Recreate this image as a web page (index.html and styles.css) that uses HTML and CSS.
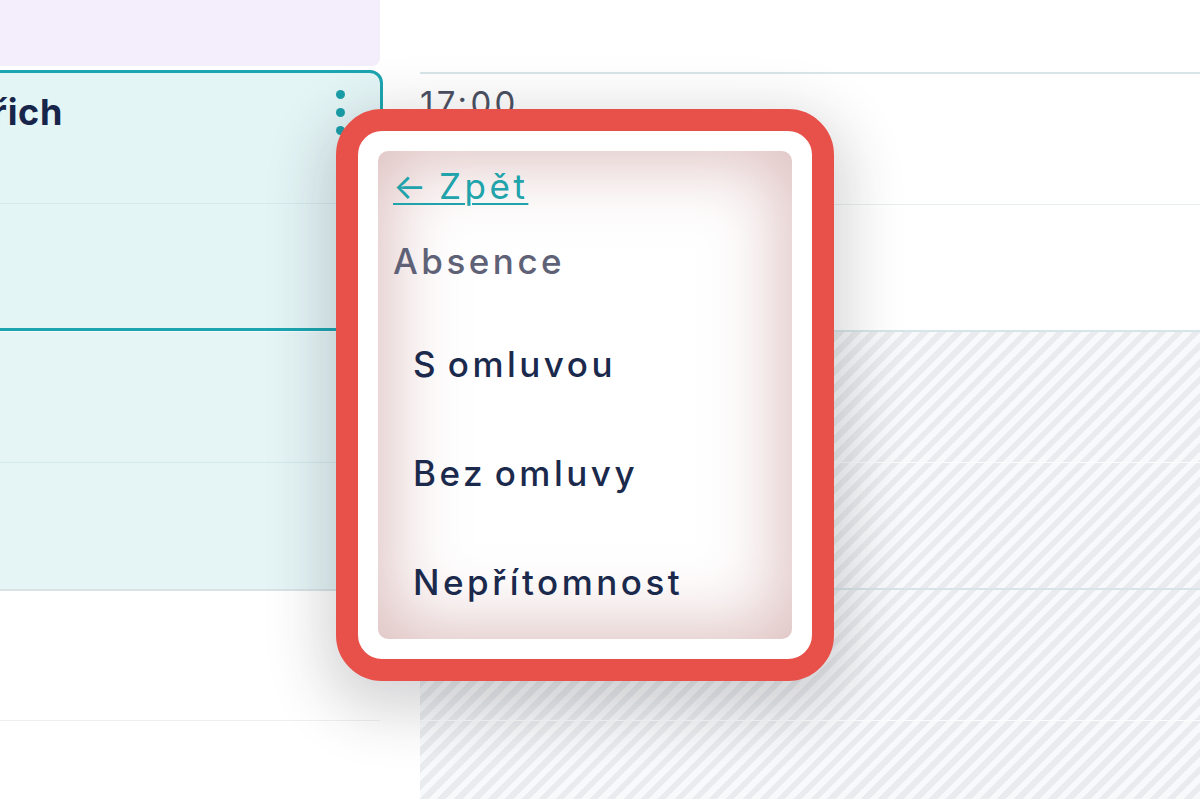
FILE: index.html
```html
<!DOCTYPE html>
<html lang="cs">
<head>
  <meta charset="UTF-8" />
  <title>Rozvrh – absence</title>
  <link rel="stylesheet" href="styles.css">
</head>
<body>
  <div class="day">
    <div class="col col-events">
      <div class="event event-lesson"></div>

      <div class="event event-selected">
        <div class="event-half">
          <div class="event-head">
            <div class="event-title">řich</div>
            <div class="kebab">
              <span class="dot"></span>
              <span class="dot"></span>
              <span class="dot"></span>
            </div>
          </div>
        </div>
      </div>

      <div class="event event-next">
        <div class="event-half"></div>
      </div>

      <div class="empty-slot"></div>
    </div>

    <div class="col col-times">
      <div class="row row-top"></div>
      <div class="row row-half">
        <div class="time-label">17:00</div>
      </div>
      <div class="row row-hour"></div>
      <div class="blocked">
        <div class="row row-half row-faint"></div>
        <div class="row row-hour"></div>
        <div class="row row-half row-faint"></div>
      </div>
    </div>
  </div>

  <div class="highlight">
    <div class="menu">
      <a class="menu-back" href="#">← Zpět</a>
      <div class="menu-heading">Absence</div>
      <ul class="menu-list">
        <li class="menu-item">S omluvou</li>
        <li class="menu-item">Bez omluvy</li>
        <li class="menu-item">Nepřítomnost</li>
      </ul>
    </div>
  </div>
</body>
</html>
```

FILE: styles.css
```css
html, body {
  margin: 0;
  padding: 0;
  width: 100%;
  height: 100%;
  overflow: hidden;
  background: #fff;
  font-family: Inter, "Noto Sans", sans-serif;
  color: #1b2a4c;
}

.day {
  display: grid;
  grid-template-columns: 403px 1fr;
  column-gap: 37px;
  margin-left: -20px;
  height: 799px;
}

/* left column – events */

.col-events {
  display: flex;
  flex-direction: column;
}

.event-lesson {
  width: 400px;
  height: 66px;
  background: #f4edfc;
  border-bottom-right-radius: 8px;
}

.event-selected {
  margin-top: 4px;
  height: 261px;
  box-sizing: border-box;
  background: #e4f5f6;
  border: 3px solid #1ba5b0;
  border-radius: 0 13px 0 0;
}

.event-half {
  height: 131px;
  box-sizing: border-box;
  border-bottom: 1px solid #d4eaec;
}

.event-head {
  display: flex;
  justify-content: space-between;
  align-items: flex-start;
  padding: 17px 35px 0 0;
}

.event-title {
  margin: 2px 0 0 9px;
  font-size: 36px;
  line-height: 40px;
  font-weight: 700;
  letter-spacing: 0.02em;
  color: #17254a;
}

.kebab {
  display: flex;
  flex-direction: column;
  gap: 9px;
}

.dot {
  width: 9px;
  height: 9px;
  border-radius: 50%;
  background: #1a9fa9;
}

.event-next {
  height: 260px;
  box-sizing: border-box;
  background: #e5f5f6;
  border-top: 1px solid #f4fbfb;
  border-bottom: 2px solid #d9e3e6;
}

.empty-slot {
  width: 400px;
  height: 130px;
  box-sizing: border-box;
  border-bottom: 1px solid #edf0f2;
}

/* right column – time grid */

.col-times {
  display: flex;
  flex-direction: column;
}

.row {
  box-sizing: border-box;
}

.row-top {
  height: 74px;
  border-bottom: 2px solid #d7e5e8;
}

.row-half {
  height: 131px;
  border-bottom: 1px solid #e9eff1;
}

.row-hour {
  height: 127px;
  border-bottom: 2px solid #d7e5e8;
}

.row-faint {
  border-bottom-color: #fbfcfc;
}

.time-label {
  padding-top: 11px;
  font-size: 33px;
  line-height: 36px;
  letter-spacing: 0.1em;
  color: #4b4f62;
}

.blocked {
  flex: 1;
  background: repeating-linear-gradient(135deg, #f8f9fa 0 6px, #e9ebee 6px 12px);
}

/* highlighted popup menu */

.highlight {
  position: absolute;
  left: 336px;
  top: 109px;
  padding: 20px;
  background: #fff;
  border: 22px solid #e8514a;
  border-radius: 46px;
  box-shadow: 0 18px 60px 12px rgba(40, 40, 50, 0.2);
}

.menu {
  width: 414px;
  height: 488px;
  box-sizing: border-box;
  padding: 14px 0 0 15px;
  border-radius: 10px;
  background: #fff;
  box-shadow: inset 0 0 70px 12px rgba(190, 130, 130, 0.5);
  font-size: 35px;
  letter-spacing: 0.1em;
  word-spacing: -0.12em;
}

.menu-back {
  display: inline-block;
  line-height: 40px;
  color: #20a3ab;
  text-decoration: underline;
  text-decoration-thickness: 2px;
  text-underline-offset: 4px;
}

.menu-heading {
  margin-top: 34px;
  line-height: 40px;
  font-weight: 500;
  color: #5f6277;
}

.menu-list {
  list-style: none;
  margin: 29px 0 0;
  padding: 0;
}

.menu-item {
  padding: 38px 0 38px 20px;
  line-height: 33px;
  font-weight: 500;
  color: #1b2a4c;
}
```
